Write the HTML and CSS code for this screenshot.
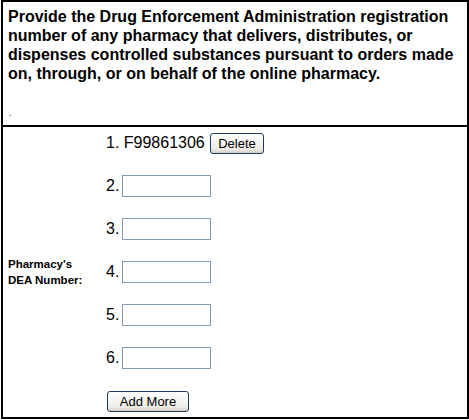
FILE: index.html
```html
<!DOCTYPE html>
<html lang="en">
<head>
    <meta charset="UTF-8">
    <title>DEA Number</title>
    <link rel="stylesheet" href="styles.css">
</head>
<body>
    <div class="caja">
        <div class="cabecera">
            <p class="pregunta">Provide the Drug Enforcement Administration registration number of any pharmacy that delivers, distributes, or dispenses controlled substances pursuant to orders made on, through, or on behalf of the online pharmacy.</p>
            <p class="punto">.</p>
        </div>
        <div class="cuerpo">
            <div class="etiqueta">Pharmacy's<br>DEA Number:</div>
            <div class="lista">
                <div class="fila"><span class="num">1.</span> F99861306 <button class="boton">Delete</button></div>
                <div class="fila"><span class="num">2.</span><input type="text" class="campo"></div>
                <div class="fila"><span class="num">3.</span><input type="text" class="campo"></div>
                <div class="fila"><span class="num">4.</span><input type="text" class="campo"></div>
                <div class="fila"><span class="num">5.</span><input type="text" class="campo"></div>
                <div class="fila"><span class="num">6.</span><input type="text" class="campo"></div>
                <div class="fila"><button class="boton grande">Add More</button></div>
            </div>
        </div>
    </div>
</body>
</html>
```

FILE: styles.css
```css
body {
    margin: 0;
    background-color: #fff;
    font-family: "Liberation Sans", Arial, sans-serif;
    color: #000;
}

.caja {
    width: 464px;
    height: 415px;
    margin-left: 1px;
    border: 2px solid #000;
    display: flex;
    flex-direction: column;
}

.cabecera {
    padding: 5px 6px 0 5px;
    border-bottom: 2px solid #000;
    box-sizing: border-box;
    height: 125px;
}

.pregunta {
    margin: 0;
    font-size: 16px;
    font-weight: bold;
    line-height: 19px;
}

.punto {
    margin: 25px 0 0 1px;
    font-size: 9px;
}

.cuerpo {
    flex: 1;
    display: flex;
    align-items: center;
}

.etiqueta {
    width: 98px;
    padding-left: 5px;
    font-size: 11.5px;
    font-weight: bold;
    line-height: 16px;
}

.lista {
    display: flex;
    flex-direction: column;
    gap: 21px;
}

.fila {
    height: 22px;
    display: flex;
    align-items: center;
    font-size: 16px;
    white-space: pre;
}

.campo {
    width: 89px;
    height: 22px;
    box-sizing: border-box;
    border: 1px solid #7f9db9;
    margin: 0 0 0 3px;
    padding: 0 2px;
}

.boton {
    font-family: "Liberation Sans", Arial, sans-serif;
    font-size: 13px;
    height: 21px;
    padding: 0 7px;
    margin: 0 0 0 1px;
    border: 1px solid #1f3b62;
    border-radius: 3px;
    background: linear-gradient(#ffffff, #ecebe6 80%, #d6d0c5);
    color: #000;
}

.boton.grande {
    width: 82px;
    margin-left: 1px;
}
```
